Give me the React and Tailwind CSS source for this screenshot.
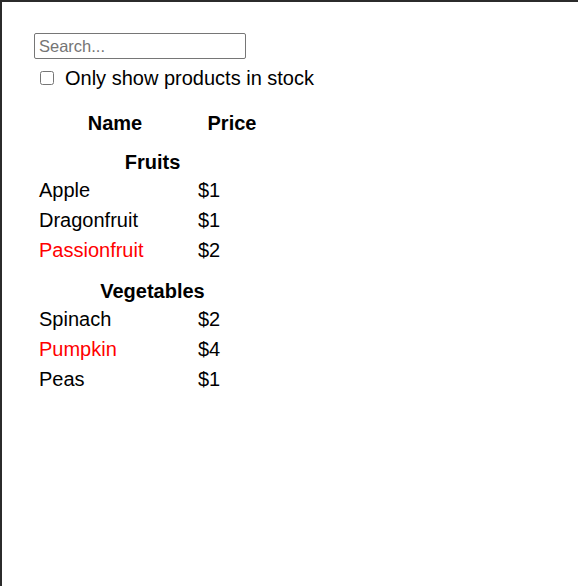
export default function App() {
  const fruits = [
    { name: "Apple", price: "$1", stocked: true },
    { name: "Dragonfruit", price: "$1", stocked: true },
    { name: "Passionfruit", price: "$2", stocked: false },
  ];
  const veg = [
    { name: "Spinach", price: "$2", stocked: true },
    { name: "Pumpkin", price: "$4", stocked: false },
    { name: "Peas", price: "$1", stocked: true },
  ];
  const Rows = ({ items }) =>
    items.map((p) => (
      <tr key={p.name} className="h-[30px]">
        <td className={"w-[156px] pl-[2px] p-0 align-middle " + (p.stocked ? "text-black" : "text-[#ff0000]")}>{p.name}</td>
        <td className="w-[75px] pl-[5px] p-0 align-middle">{p.price}</td>
      </tr>
    ));
  return (
    <div
      className="h-[586px] w-[578px] bg-white border-t-2 border-l-2 border-[#2b2b2b] pl-[32px] pt-[31px] text-black text-[20px] leading-[26px]"
      style={{ fontFamily: '"Liberation Sans", Arial, sans-serif' }}
    >
      <input
        type="text"
        placeholder="Search..."
        className="block w-[212px] h-[26px] border border-[#767676] rounded-[2px] px-[4px] text-[16.5px] leading-[20px] placeholder:text-[#757575] outline-none"
        style={{ fontFamily: '"Liberation Sans", Arial, sans-serif' }}
      />
      <label className="mt-[5px] h-[28px] flex items-center">
        <input type="checkbox" className="ml-[6px] m-0 w-[14px] h-[14px]" />
        <span className="ml-[11px]">Only show products in stock</span>
      </label>
      <table className="mt-[18px] ml-[3px] border-separate border-spacing-0">
        <thead>
          <tr className="h-[26px]">
            <th className="w-[156px] p-0 text-center font-bold align-middle">Name</th>
            <th className="w-[75px] p-0 pl-[3px] text-center font-bold align-middle">Price</th>
          </tr>
        </thead>
        <tbody>
          <tr className="h-[39px]">
            <th colSpan={2} className="p-0 text-center font-bold align-bottom">Fruits</th>
          </tr>
          <Rows items={fruits} />
          <tr className="h-[39px]">
            <th colSpan={2} className="p-0 text-center font-bold align-bottom">Vegetables</th>
          </tr>
          <Rows items={veg} />
        </tbody>
      </table>
    </div>
  );
}
